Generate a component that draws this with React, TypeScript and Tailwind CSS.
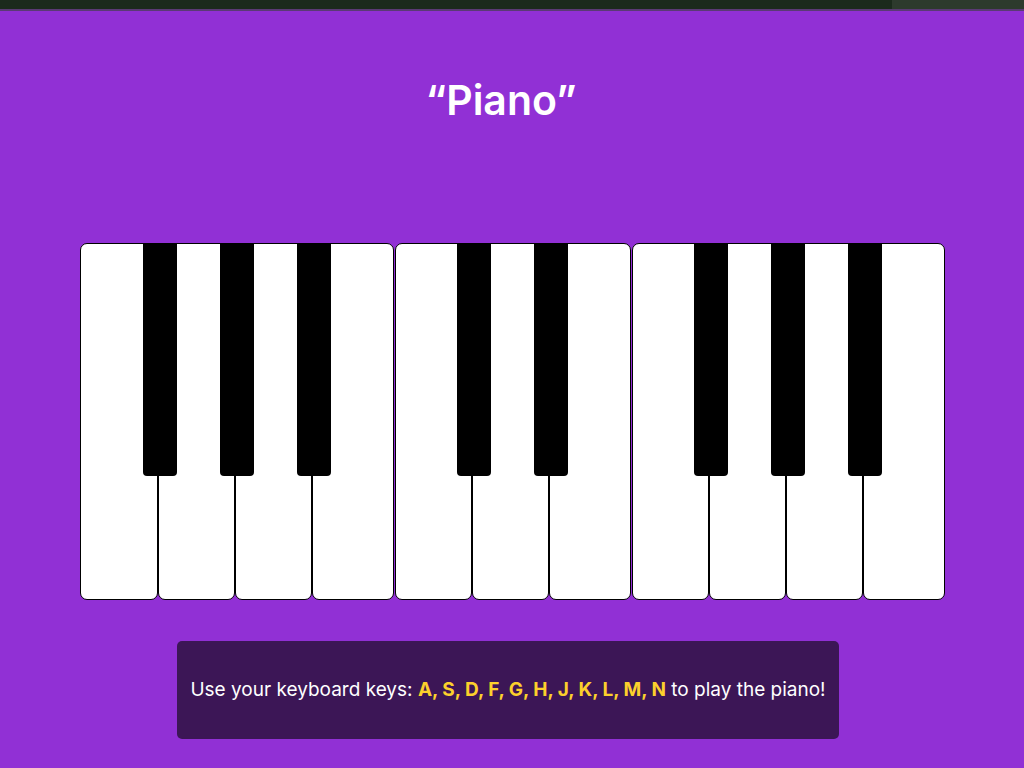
const groups = [
  [78, 77, 77, 82],
  [77, 77, 82],
  [77, 77, 77, 82],
];

function WhiteKey({ width, black }: { width: number; black: boolean }) {
  return (
    <div
      className="relative h-[357px] shrink-0 rounded-[7px] border border-black bg-white"
      style={{ width }}
    >
      {black && (
        <div className="absolute -right-[20px] -top-px z-10 h-[233px] w-[34px] rounded-b-[4px] bg-black" />
      )}
    </div>
  );
}

export default function App() {
  return (
    <div className="min-h-[768px] bg-[#9130d5] font-['Inter',sans-serif]">
      {/* browser strip */}
      <div className="flex h-[9px]">
        <div className="w-[892px] bg-[#1b2a1c]" />
        <div className="flex-1 bg-[#2d3a2d]" />
      </div>
      <div className="h-[2px] bg-[#5a3a74]" />

      <h1 className="mt-[65px] pr-[22px] text-center text-[41px] font-semibold leading-[48px] text-white">
        “Piano”
      </h1>

      {/* keyboard */}
      <div className="mx-auto mt-[119px] flex w-[865px] gap-px">
        {groups.map((g, gi) => (
          <div key={gi} className="flex">
            {g.map((w, i) => (
              <WhiteKey key={i} width={w} black={i < g.length - 1} />
            ))}
          </div>
        ))}
      </div>

      <div className="ml-[177px] mt-[41px] flex h-[98px] w-[662px] items-center justify-center rounded-[5px] bg-[#3c1656] text-[19px] whitespace-nowrap text-white">
        <p>
          Use your keyboard keys:{' '}
          <span className="font-bold text-[#fcd02c]">A, S, D, F, G, H, J, K, L, M, N</span> to play the
          piano!
        </p>
      </div>
    </div>
  );
}
